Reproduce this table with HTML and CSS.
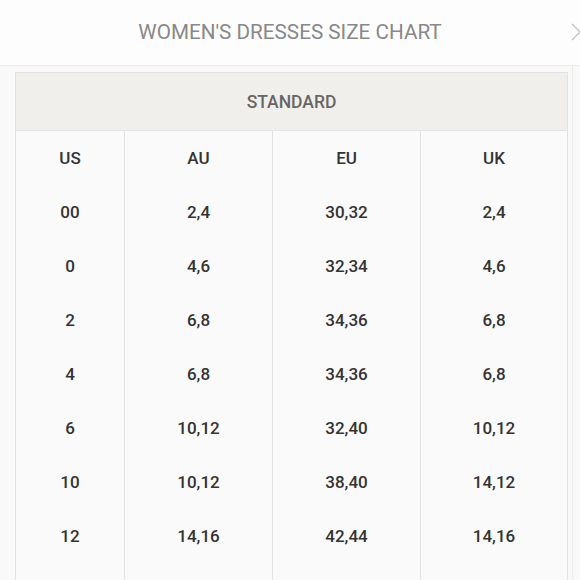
FILE: index.html
```html
<!DOCTYPE html>
<html>
<head>
<meta charset="utf-8">
<link rel="stylesheet" href="styles.css">
</head>
<body>
<div class="page">
  <header class="topbar">
    <h1 class="title">WOMEN'S DRESSES SIZE CHART</h1>
    <svg class="chev" width="12" height="20" viewBox="0 0 12 20"><path d="M2 2 L10 10 L2 18" fill="none" stroke="#c4c4c4" stroke-width="1.4"/></svg>
  </header>
  <div class="content">
    <table class="chart">
      <colgroup>
        <col class="c1"><col class="c2"><col class="c3"><col class="c4">
      </colgroup>
      <thead>
        <tr><th colspan="4" class="group">STANDARD</th></tr>
      </thead>
      <tbody>
        <tr><td>US</td><td>AU</td><td>EU</td><td>UK</td></tr>
        <tr><td>00</td><td>2,4</td><td>30,32</td><td>2,4</td></tr>
        <tr><td>0</td><td>4,6</td><td>32,34</td><td>4,6</td></tr>
        <tr><td>2</td><td>6,8</td><td>34,36</td><td>6,8</td></tr>
        <tr><td>4</td><td>6,8</td><td>34,36</td><td>6,8</td></tr>
        <tr><td>6</td><td>10,12</td><td>32,40</td><td>10,12</td></tr>
        <tr><td>10</td><td>10,12</td><td>38,40</td><td>14,12</td></tr>
        <tr><td>12</td><td>14,16</td><td>42,44</td><td>14,16</td></tr>
        <tr><td></td><td></td><td></td><td></td></tr>
      </tbody>
    </table>
  </div>
</div>
</body>
</html>
```
FILE: styles.css
```css
html, body {
  margin: 0;
  padding: 0;
  background: #f9f9f9;
  font-family: Roboto, "Liberation Sans", sans-serif;
  overflow: hidden;
}
.page {
  width: 580px;
  height: 580px;
  overflow: hidden;
}
.topbar {
  height: 65px;
  background: #fdfdfd;
  border-bottom: 1px solid #ececec;
  display: flex;
  align-items: center;
  justify-content: center;
  position: relative;
}
.title {
  margin: 0;
  font-size: 20.7px;
  font-weight: 400;
  color: #888;
  letter-spacing: 0;
  padding-bottom: 2px;
}
.chev {
  position: absolute;
  right: -2px;
  top: 22px;
}
.content {
  padding: 6px 0 0 15px;
  width: 557px;
  border-right: 1px solid #ececec;
}
.chart {
  width: 552px;
  border-collapse: collapse;
  table-layout: fixed;
  background: #fafafa;
}
.c1 { width: 109px; }
.c2 { width: 148px; }
.c3 { width: 148px; }
.c4 { width: 147px; }
.chart th, .chart td {
  border: 1px solid #e2e2e2;
  text-align: center;
  padding: 0;
}
.group {
  height: 57px;
  padding-top: 5px;
  background: #f1efeb;
  color: #666;
  font-size: 17.5px;
  font-weight: 500;
}
.chart td {
  height: 54px;
  font-size: 17px;
  font-weight: 500;
  color: #333;
  border-top: none;
  border-bottom: none;
}
```
